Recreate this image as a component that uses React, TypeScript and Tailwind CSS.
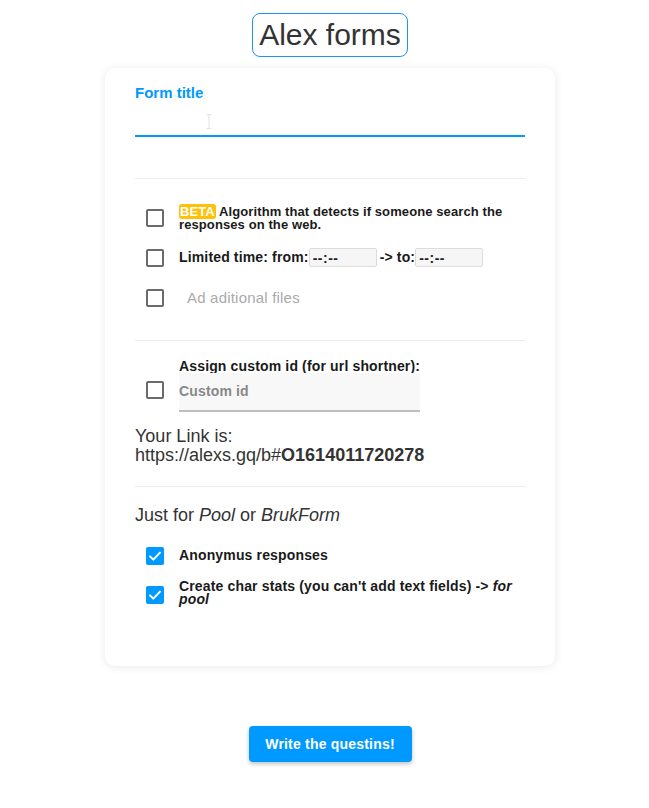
import React from "react";

function Box({ checked = false }: { checked?: boolean }) {
  if (checked) {
    return (
      <div className="w-[18px] h-[18px] rounded-[2px] bg-[#0099ff] flex items-center justify-center shrink-0">
        <svg width="16" height="16" viewBox="0 0 24 24" fill="none">
          <path d="M4.5 12.5l5 5L19.5 7" stroke="#fff" strokeWidth="3" strokeLinecap="round" strokeLinejoin="round" />
        </svg>
      </div>
    );
  }
  return <div className="w-[18px] h-[18px] rounded-[2px] border-2 border-[#6b6b6b] bg-white shrink-0" />;
}

function TimeInput() {
  return (
    <div className="w-[68px] h-[19px] bg-[#f6f6f6] border border-[#dcdcdc] rounded-[2px] flex items-center pl-[3px] text-[14px] font-bold text-[#222] leading-none tracking-[0.5px]">
      --:--
    </div>
  );
}

export default function App() {
  return (
    <div className="min-h-screen bg-white font-['Liberation_Sans',Arial,sans-serif] flex flex-col items-center pt-[13px] pl-[11px] text-[#222]">
      <h1 className="text-[30px] leading-[34px] px-[6px] py-[4px] border border-[#1e90ff] rounded-[8px] text-[#333]">
        Alex forms
      </h1>

      <div className="mt-[11px] w-[450px] h-[598px] bg-white rounded-[10px] shadow-[0_1px_10px_rgba(0,0,0,0.09)] px-[30px] pt-[17px] flex flex-col">
        <div className="text-[15px] leading-[16px] font-bold text-[#0099ff]">Form title</div>
        <div className="relative h-[36px] border-b-2 border-[#0099ff]">
          <svg className="absolute left-[71px] top-[13px]" width="6" height="15" viewBox="0 0 6 15">
            <path d="M0.5 0.5h5M3 0.5v14M0.5 14.5h5" stroke="#e3e3e3" strokeWidth="1" fill="none" />
          </svg>
        </div>
        <div className="mt-[41px] h-px bg-[#ececec]" />

        <div className="mt-[26px] flex items-center">
          <div className="ml-[11px]"><Box /></div>
          <div className="ml-[15px] text-[13px] leading-[13px] font-bold text-[#1a1a1a] tracking-[0.1px]">
            <span className="bg-[#ffc107] text-white rounded-[3px] px-[1px]">BETA</span> Algorithm that detects if someone search the responses on the web.
          </div>
        </div>

        <div className="mt-[17px] flex items-center h-[19px]">
          <div className="ml-[11px]"><Box /></div>
          <div className="ml-[15px] flex items-center text-[14px] font-bold text-[#1a1a1a] tracking-[0.15px]">
            <span>Limited time: from:</span>
            <TimeInput />
            <span className="ml-[3px]">-&gt; to:</span>
            <TimeInput />
          </div>
        </div>

        <div className="mt-[22px] flex items-center">
          <div className="ml-[11px]"><Box /></div>
          <div className="ml-[23px] text-[15px] leading-[18px] text-[#aaaaaa] tracking-[0.2px]">Ad aditional files</div>
        </div>

        <div className="mt-[33px] h-px bg-[#ececec]" />

        <div className="mt-[18px] flex items-start">
          <div className="ml-[11px] mt-[22px]"><Box /></div>
          <div className="ml-[15px] flex flex-col">
            <div className="text-[14px] leading-[14px] font-bold text-[#1a1a1a] tracking-[0.15px]">Assign custom id (for url shortner):</div>
            <div className="w-[241px] h-[39px] bg-[#f8f8f8] border-b-2 border-[#bdbdbd] flex items-center text-[14px] font-bold text-[#888] tracking-[0.15px]">
              Custom id
            </div>
          </div>
        </div>

        <div className="mt-[15px] text-[18px] leading-[19px] text-[#333]">
          Your Link is:
          <br />
          https://alexs.gq/b#<span className="font-bold">O1614011720278</span>
        </div>

        <div className="mt-[21px] h-px bg-[#ececec]" />

        <div className="mt-[18px] text-[18px] leading-[21px] text-[#333]">
          Just for <i>Pool</i> or <i>BrukForm</i>
        </div>

        <div className="mt-[21px] flex items-center">
          <div className="ml-[11px]"><Box checked /></div>
          <div className="ml-[15px] text-[14px] leading-[16px] font-bold text-[#1a1a1a] tracking-[0.15px] -mt-[3px]">Anonymus responses</div>
        </div>

        <div className="mt-[18px] flex items-center">
          <div className="ml-[11px]"><Box checked /></div>
          <div className="ml-[15px] text-[14px] leading-[13px] font-bold text-[#1a1a1a] tracking-[0.15px] -mt-[3px]">
            Create char stats (you can't add text fields) -&gt; <i>for pool</i>
          </div>
        </div>
      </div>

      <button className="mt-[60px] w-[163px] h-[36px] bg-[#0099ff] text-white text-[14px] font-bold tracking-[0.2px] rounded-[4px] shadow-[0_2px_4px_rgba(0,0,0,0.25)]">
        Write the questins!
      </button>
    </div>
  );
}
